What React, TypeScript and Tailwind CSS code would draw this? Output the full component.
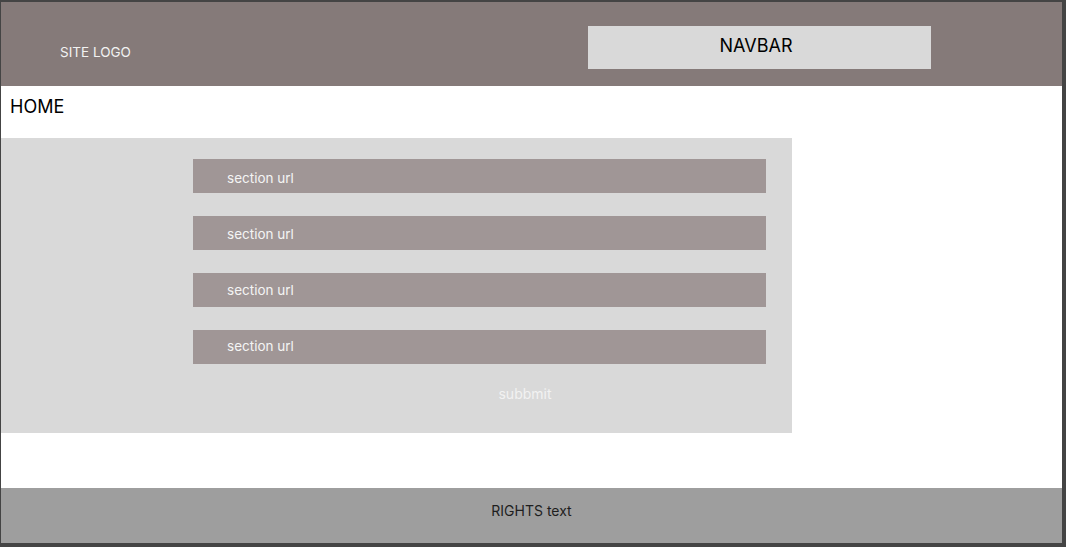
export default function App() {
  // the labels sit a touch higher in each successive bar in the mock-up
  const urls = [
    { label: "section url", pad: "pt-[4px]" },
    { label: "section url", pad: "pt-[2px]" },
    { label: "section url", pad: "pt-[1px]" },
    { label: "section url", pad: "pb-[2px]" },
  ];

  return (
    <div
      className="flex h-[547px] w-[1066px] flex-col bg-[#444444] pt-[2px] pr-[4px] pb-[4px] pl-[1px]"
      style={{ fontFamily: "Inter, 'Liberation Sans', sans-serif" }}
    >
      <div className="flex flex-1 flex-col bg-white">
        {/* header */}
        <header className="flex h-[84px] items-start bg-[#857a79] pr-[131px]">
          <div className="mt-[42px] pl-[59px] text-[13.5px] leading-[17px] text-[#f2f2f2]">
            SITE LOGO
          </div>
          <nav className="ml-auto mt-[24px] flex h-[43px] w-[343px] justify-center bg-[#d9d9d9] pt-[9px] pr-[7px] text-[18px] leading-[22px] text-black">
            NAVBAR
          </nav>
        </header>

        {/* page title */}
        <div className="h-[52px] pl-[9px] pt-[9px] text-[18px] leading-[23px] text-black">
          HOME
        </div>

        {/* form section */}
        <section className="flex h-[295px] w-[791px] flex-col bg-[#d9d9d9] pt-[21px] pl-[192px]">
          <div className="flex w-[573px] flex-col gap-[23px]">
            {urls.map((u, i) => (
              <div
                key={i}
                className={`flex h-[34px] items-center bg-[#a09696] pl-[34px] text-[13.5px] text-[#f4f4f4] ${u.pad}`}
              >
                {u.label}
              </div>
            ))}
          </div>
          <button className="mt-[21px] w-[573px] text-center text-[14px] leading-[17px] text-[#f2f2f2]">
            <span className="ml-[91px]">subbmit</span>
          </button>
        </section>

        <div className="flex-1" />

        {/* footer */}
        <footer className="flex h-[55px] justify-center bg-[#9e9e9e] pt-[14px] text-[14px] leading-[17px] text-[#1e1e1e]">
          RIGHTS text
        </footer>
      </div>
    </div>
  );
}
